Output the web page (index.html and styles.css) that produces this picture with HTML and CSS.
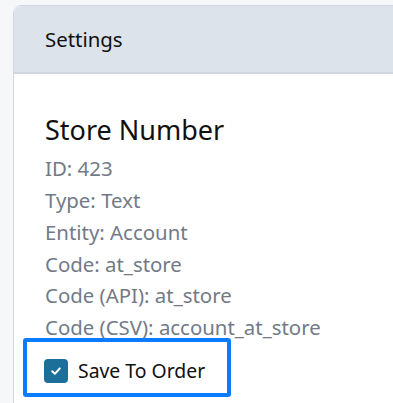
FILE: index.html
```html
<!DOCTYPE html>
<html lang="en">
<head>
    <meta charset="UTF-8">
    <meta name="viewport" content="width=device-width, initial-scale=1.0">
    <title>Settings</title>
    <link rel="stylesheet" href="styles.css">
</head>
<body>

    <div class="card">
        <div class="card-header">Settings</div>
        <div class="card-body">
            <h2 class="field-title">Store Number</h2>
            <ul class="field-info">
                <li>ID: 423</li>
                <li>Type: Text</li>
                <li>Entity: Account</li>
                <li>Code: at_store</li>
                <li>Code (API): at_store</li>
                <li>Code (CSV): account_at_store</li>
            </ul>
            <label class="check-row">
                <span class="check-box">
                    <svg width="14" height="14" viewBox="0 0 14 14">
                        <path d="M3.2 7.2 L5.9 9.8 L10.8 4.4" fill="none" stroke="#fff" stroke-width="2" stroke-linecap="round" stroke-linejoin="round"/>
                    </svg>
                </span>
                <span class="check-label">Save To Order</span>
            </label>
        </div>
    </div>

</body>
</html>
```

FILE: styles.css
```css
body {
    font-family: "Noto Sans", "Open Sans", sans-serif;
    margin: 0;
    padding: 5px 0 0 13px;
    background-color: #f6f7f9;
    overflow: hidden;
    height: 403px;
}
.card {
    width: 520px;
    background: #fff;
    border: 1px solid #d2d6e2;
    border-radius: 8px;
    height: 420px;
}
.card-header {
    background-color: #dde3ea;
    border-bottom: 2px solid #d2d6e2;
    border-radius: 8px 8px 0 0;
    padding: 18px 31px;
    font-size: 20.4px;
    line-height: 30px;
    color: #111;
}
.card-body {
    padding: 40px 31px 0;
}
.field-title {
    margin: 0 0 7px;
    font-size: 27px;
    font-weight: normal;
    line-height: 1.2;
    color: #111;
}
.field-info {
    list-style: none;
    margin: 0;
    padding: 0;
    font-size: 20.4px;
    line-height: 31.7px;
    color: #737a86;
}
.check-row {
    display: flex;
    align-items: center;
    gap: 10px;
    box-sizing: content-box;
    margin: -6px 0 0 -22px;
    padding: 17px 0 10px 17px;
    border: 4px solid #0b7cff;
    border-radius: 3px;
    width: 183px;
    line-height: 24px;
}
.check-box {
    display: flex;
    align-items: center;
    justify-content: center;
    width: 24px;
    height: 24px;
    border-radius: 4px;
    background-color: #1b6f98;
}
.check-label {
    font-size: 19.4px;
    color: #111;
}
```
